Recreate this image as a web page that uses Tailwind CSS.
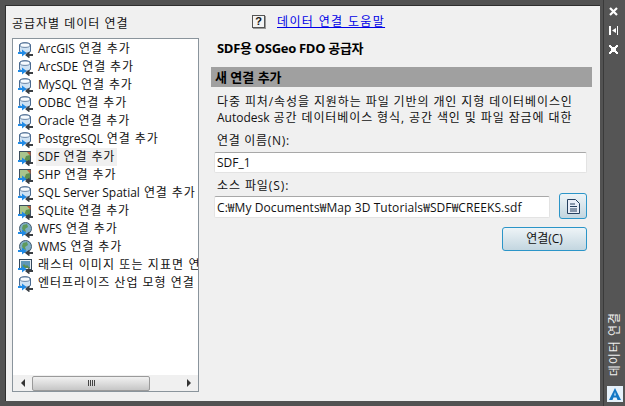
<!DOCTYPE html>
<html lang="ko">
<head>
  <meta charset="UTF-8">
  <title>데이터 연결</title>
  <script src="https://cdn.jsdelivr.net/npm/@tailwindcss/browser@4"></script>
</head>
<body class="w-[625px] h-[406px] overflow-hidden bg-[#525252] font-['Open_Sans','Noto_Sans_CJK_KR',sans-serif] text-[12px] text-[#111]">
  <svg width="0" height="0" class="absolute">
    <defs>
      <g id="arrows">
        <path d="M0 12h4V9.500L8.500 13 4 16.500V14H0z" fill="#1f8ae6"/>
        <path d="M15 14h-3.500v-2.500L7 15l4.500 3.500V16H15z" fill="#3a3f44"/>
      </g>
      <g id="db">
        <path d="M1.500 5C1.500 2 12.500 2 12.500 5V11C12.500 14 1.500 14 1.500 11Z" fill="#cfe2f3" stroke="#4a6a90"/>
        <ellipse cx="7" cy="5.200" rx="5" ry="2.200" fill="#f6fbff" stroke="#4a6a90" stroke-width=".8"/>
        <use href="#arrows"/>
      </g>
      <g id="sdf">
        <rect x="1.500" y="3.500" width="11" height="10" fill="#5f9150" stroke="#3d4f5f"/>
        <path d="M2 4h10v3L8 8l-2 5H2z" fill="#a9c58d"/>
        <path d="M9 4h3.500v4z" fill="#c2603a"/>
        <use href="#arrows"/>
      </g>
      <g id="globe">
        <circle cx="7.500" cy="8.500" r="6" fill="#7fb0c8" stroke="#44596e"/>
        <path d="M5 5l4-1 1 3-3 2 1 3-3-1-1-3z" fill="#5f9a5c"/>
        <use href="#arrows"/>
      </g>
      <g id="raster">
        <rect x="1.500" y="3.500" width="12" height="10" fill="#e8eef3" stroke="#33485c"/>
        <rect x="3" y="5" width="9" height="7" fill="#5f97b8"/>
        <path d="M3 12l3-4 2 2 1-1 3 3z" fill="#5d8f50"/>
        <use href="#arrows"/>
      </g>
    </defs>
  </svg>

  <div class="flex h-full">
    <!-- main panel -->
    <div class="w-[603px] h-full pl-[5px] pt-[5px] pr-[3px] pb-[5px] shrink-0">
      <div class="h-[396px] w-[595px] bg-[#f0f0f0] border-l border-t border-[#2e2e2e] flex">
        <!-- provider list -->
        <div class="w-[199px] shrink-0 pl-[6px] flex flex-col">
          <div class="h-[32px] pt-[9px] leading-[18px] tracking-[1px]">공급자별 데이터 연결</div>
          <div class="w-[187px] h-[354px] bg-white border border-[#8a949c] flex flex-col overflow-hidden">
            <ul class="flex-1 pl-[5px] pt-[1px] overflow-hidden">
              <li class="flex items-center h-[18px] whitespace-pre"><svg class="w-[16px] h-[18px] shrink-0 mr-[2px]" viewBox="0 0 16 18"><use href="#db"/></svg><span class="px-[2px] leading-[18px]">ArcGIS<span class="tracking-[.9px]"> 연결 추가</span></span></li>
              <li class="flex items-center h-[18px] whitespace-pre"><svg class="w-[16px] h-[18px] shrink-0 mr-[2px]" viewBox="0 0 16 18"><use href="#db"/></svg><span class="px-[2px] leading-[18px]">ArcSDE<span class="tracking-[.9px]"> 연결 추가</span></span></li>
              <li class="flex items-center h-[18px] whitespace-pre"><svg class="w-[16px] h-[18px] shrink-0 mr-[2px]" viewBox="0 0 16 18"><use href="#db"/></svg><span class="px-[2px] leading-[18px]">MySQL<span class="tracking-[.9px]"> 연결 추가</span></span></li>
              <li class="flex items-center h-[18px] whitespace-pre"><svg class="w-[16px] h-[18px] shrink-0 mr-[2px]" viewBox="0 0 16 18"><use href="#db"/></svg><span class="px-[2px] leading-[18px]">ODBC<span class="tracking-[.9px]"> 연결 추가</span></span></li>
              <li class="flex items-center h-[18px] whitespace-pre"><svg class="w-[16px] h-[18px] shrink-0 mr-[2px]" viewBox="0 0 16 18"><use href="#db"/></svg><span class="px-[2px] leading-[18px]">Oracle<span class="tracking-[.9px]"> 연결 추가</span></span></li>
              <li class="flex items-center h-[18px] whitespace-pre"><svg class="w-[16px] h-[18px] shrink-0 mr-[2px]" viewBox="0 0 16 18"><use href="#db"/></svg><span class="px-[2px] leading-[18px]">PostgreSQL<span class="tracking-[.9px]"> 연결 추가</span></span></li>
              <li class="flex items-center h-[18px] whitespace-pre"><svg class="w-[16px] h-[18px] shrink-0 mr-[2px]" viewBox="0 0 16 18"><use href="#sdf"/></svg><span class="px-[2px] leading-[18px] bg-[#f0f0f0]">SDF<span class="tracking-[.9px]"> 연결 추가</span></span></li>
              <li class="flex items-center h-[18px] whitespace-pre"><svg class="w-[16px] h-[18px] shrink-0 mr-[2px]" viewBox="0 0 16 18"><use href="#sdf"/></svg><span class="px-[2px] leading-[18px]">SHP<span class="tracking-[.9px]"> 연결 추가</span></span></li>
              <li class="flex items-center h-[18px] whitespace-pre"><svg class="w-[16px] h-[18px] shrink-0 mr-[2px]" viewBox="0 0 16 18"><use href="#db"/></svg><span class="px-[2px] leading-[18px]">SQL Server Spatial<span class="tracking-[.9px]"> 연결 추가</span></span></li>
              <li class="flex items-center h-[18px] whitespace-pre"><svg class="w-[16px] h-[18px] shrink-0 mr-[2px]" viewBox="0 0 16 18"><use href="#sdf"/></svg><span class="px-[2px] leading-[18px]">SQLite<span class="tracking-[.9px]"> 연결 추가</span></span></li>
              <li class="flex items-center h-[18px] whitespace-pre"><svg class="w-[16px] h-[18px] shrink-0 mr-[2px]" viewBox="0 0 16 18"><use href="#globe"/></svg><span class="px-[2px] leading-[18px]">WFS<span class="tracking-[.9px]"> 연결 추가</span></span></li>
              <li class="flex items-center h-[18px] whitespace-pre"><svg class="w-[16px] h-[18px] shrink-0 mr-[2px]" viewBox="0 0 16 18"><use href="#globe"/></svg><span class="px-[2px] leading-[18px]">WMS<span class="tracking-[.9px]"> 연결 추가</span></span></li>
              <li class="flex items-center h-[18px] whitespace-pre"><svg class="w-[16px] h-[18px] shrink-0 mr-[2px]" viewBox="0 0 16 18"><use href="#raster"/></svg><span class="px-[2px] leading-[18px] tracking-[1.1px]">래스터 이미지 또는 지표면 연결 추가</span></li>
              <li class="flex items-center h-[18px] whitespace-pre"><svg class="w-[16px] h-[18px] shrink-0 mr-[2px]" viewBox="0 0 16 18"><use href="#db"/></svg><span class="px-[2px] leading-[18px] tracking-[1px]">엔터프라이즈 산업 모형 연결</span></li>
            </ul>
            <!-- horizontal scrollbar -->
            <div class="h-[16px] bg-[#f0f0f0] flex items-center shrink-0">
              <div class="w-[19px] flex justify-center"><div class="border-y-[4px] border-y-transparent border-r-[4px] border-r-[#333]"></div></div>
              <div class="w-[118px] h-[15px] rounded-[2px] border border-[#9a9a9a] bg-gradient-to-b from-[#f1f1f1] via-[#dcdcdc] to-[#c6c6c6] flex items-center justify-center gap-[1px]">
                <span class="w-[1px] h-[6px] bg-[#444]"></span><span class="w-[1px] h-[6px] bg-[#444]"></span><span class="w-[1px] h-[6px] bg-[#444]"></span><span class="w-[1px] h-[6px] bg-[#444]"></span>
              </div>
              <div class="flex-1 flex justify-end pr-[7px]"><div class="border-y-[4px] border-y-transparent border-l-[4px] border-l-[#333]"></div></div>
            </div>
          </div>
        </div>

        <!-- details -->
        <div class="flex-1 min-w-0 pl-[6px] flex flex-col">
          <div class="h-[27px] pl-[41px] pt-[9px] flex items-start">
            <div class="w-[13px] h-[13px] border border-[#555] bg-[#f4f4f4] text-[11px] font-bold leading-[11px] text-center font-['Liberation_Sans','Noto_Sans_CJK_KR',sans-serif] shadow-[1px_1px_0_#999]">?</div>
            <a class="ml-[12px] -mt-[1px] text-[#0000e6] underline leading-[16px] tracking-[1.35px]">데이터 연결 도움말</a>
          </div>
          <div class="h-[34px] pl-[6px] pt-[6px] text-[13px] font-bold leading-[18px] text-black whitespace-nowrap tracking-[-0.3px]">SDF용 OSGeo FDO 공급자</div>
          <div class="w-[381px] h-[20px] bg-[#a0a0a0] pl-[4px] text-[13px] font-bold leading-[20px] text-black">새 연결 추가</div>
          <div class="pl-[6px] pt-[7px] w-[381px] whitespace-nowrap overflow-hidden tracking-[.9px]">
            <p class="h-[16px] leading-[16px]">다중 피처/속성을 지원하는 파일 기반의 개인 지형 데이터베이스인</p>
            <p class="h-[16px] leading-[16px]"><span class="tracking-normal">Autodesk</span> 공간 데이터베이스 형식, 공간 색인 및 파일 잠금에 대한</p>
          </div>
          <div class="pl-[3px] pr-[5px] w-[381px]">
            <label class="block pl-[3px] h-[16px] mt-[7px] leading-[16px] tracking-[.7px]">연결 이름(N):</label>
            <input value="SDF_1" class="block mt-[3px] w-full h-[21px] bg-white border border-[#e3e3e3] border-t-[#a8a8a8] rounded-[2px] px-[2px] outline-none">
            <label class="block pl-[3px] h-[16px] mt-[5px] leading-[16px] tracking-[.9px]">소스 파일(S):</label>
            <div class="flex items-start mt-[2px] gap-[9px]">
              <input value="C:₩My Documents₩Map 3D Tutorials₩SDF₩CREEKS.sdf" class="block w-[336px] h-[22px] bg-white border border-[#e3e3e3] border-t-[#a8a8a8] rounded-[2px] px-[2px] outline-none tracking-[.08px]">
              <button class="-mt-[3px] w-[28px] h-[26px] rounded-[3px] border border-[#2b95c8] bg-gradient-to-b from-[#eef4f7] to-[#c3d6e0] flex items-center justify-center">
                <svg width="13" height="15" viewBox="0 0 13 15"><path d="M.5.5h8l4 4v10H.5z" fill="#e9eef8" stroke="#26405f"/><path d="M3 5h5M3 7.500h7M3 10h7M3 12h7" stroke="#26405f"/></svg>
              </button>
            </div>
            <div class="flex justify-end mt-[8px]">
              <button class="w-[85px] h-[24px] rounded-[3px] border border-[#2b95c8] bg-gradient-to-b from-[#eef4f7] to-[#c3d6e0] leading-[20px]">연결(C)</button>
            </div>
          </div>
        </div>
      </div>
    </div>

    <!-- palette bar -->
    <div class="flex-1 flex flex-col items-center border-l border-[#3a3a3a] bg-[#555] pt-[7px] pb-[4px] pr-[2px] text-white">
      <svg width="9" height="9" viewBox="0 0 9 9" class="mb-[10px]"><path d="M1 1l7 7M8 1L1 8" stroke="#fff" stroke-width="2.200"/></svg>
      <svg width="9" height="9" viewBox="0 0 9 9" class="mb-[10px]"><path d="M0 0h2v9H0zM8 0h1v9H8zM7 2v5L3 4.500z" fill="#fff"/></svg>
      <svg width="9" height="9" viewBox="0 0 9 9"><path d="M0 0h2v1h1v1h3V1h1V0h2v2H8v1H7v3h1v1h1v2H7V8H6V7H3v1H2v1H0V7h1V6h1V3H1V2H0z" fill="#fff"/><path d="M4 3h1v3H4zM3 4h3v1H3z" fill="#fff"/></svg>
      <div class="mt-auto [writing-mode:vertical-rl] [text-orientation:sideways] rotate-180 leading-[14px] mb-[10px] text-[#f0f0f0] tracking-[1px] ml-[2px]">데이터 연결</div>
      <div class="w-[16px] h-[16px] bg-[#e6f1fa] flex items-center justify-center ml-[2px]">
        <svg width="14" height="14" viewBox="0 0 14 14"><path d="M7 1L13 13H9.500L8.500 10.500H5.500L4.500 13H1z" fill="#1277c4"/><path d="M7 5L8 8.500H6z" fill="#bfe0f5"/></svg>
      </div>
    </div>
  </div>
</body>
</html>
